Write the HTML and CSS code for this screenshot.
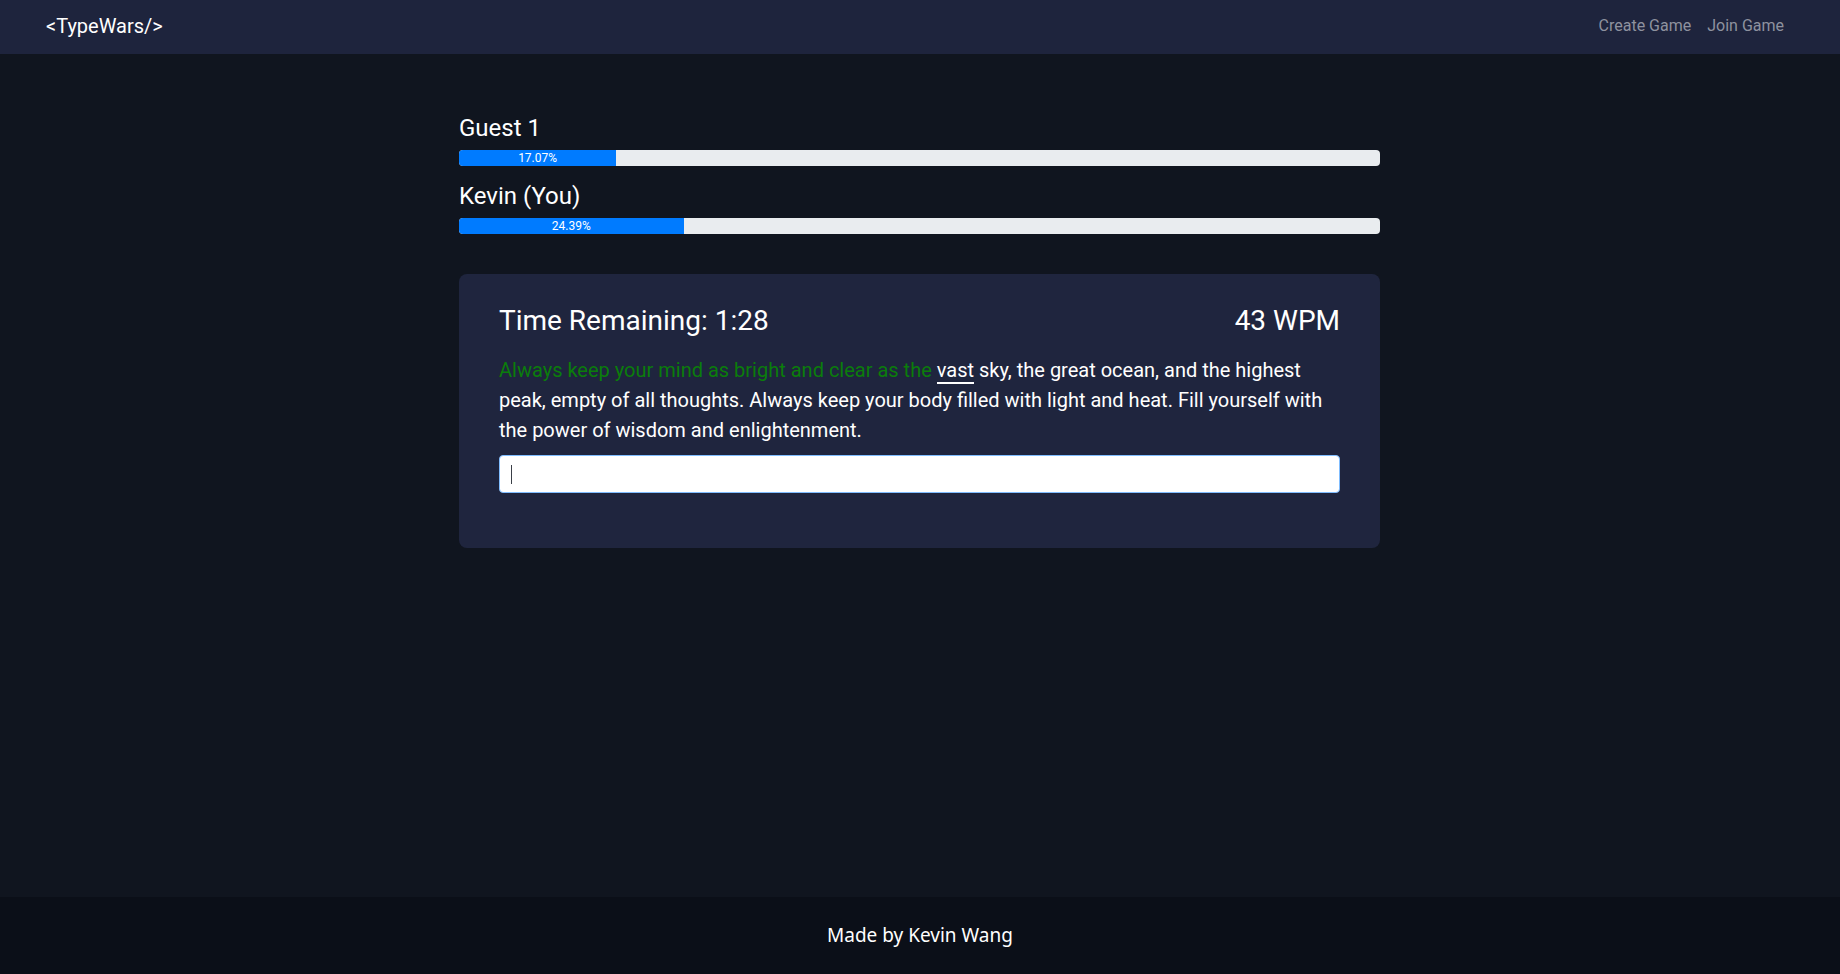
FILE: index.html
```html
<!DOCTYPE html>
<html lang="en">
<head>
<meta charset="utf-8">
<title>TypeWars</title>
<link rel="stylesheet" href="styles.css">
</head>
<body>
<div class="page">
  <nav class="navbar">
    <a class="brand" href="#">&lt;TypeWars/&gt;</a>
    <div class="nav-links">
      <a class="nav-link" href="#">Create Game</a>
      <a class="nav-link" href="#">Join Game</a>
    </div>
  </nav>
  <main class="main">
    <div class="game">
      <div class="player">
        <h4 class="player-name">Guest 1</h4>
        <div class="progress"><div class="progress-bar" style="width:17.07%">17.07%</div></div>
      </div>
      <div class="player">
        <h4 class="player-name">Kevin (You)</h4>
        <div class="progress"><div class="progress-bar" style="width:24.39%">24.39%</div></div>
      </div>
      <section class="card">
        <div class="card-head">
          <h3 class="timer">Time Remaining: 1:28</h3>
          <h3 class="wpm">43 WPM</h3>
        </div>
        <p class="passage"><span class="typed">Always keep your mind as bright and clear as the</span> <span class="current">vast</span> sky, the great ocean, and the highest peak, empty of all thoughts. Always keep your body filled with light and heat. Fill yourself with the power of wisdom and enlightenment.</p>
        <div class="input-wrap">
          <input class="type-input" type="text" aria-label="Type here">
          <span class="caret"></span>
        </div>
      </section>
    </div>
  </main>
  <footer class="footer">Made by Kevin Wang</footer>
</div>
</body>
</html>
```
FILE: styles.css
```css
* { box-sizing: border-box; }
html, body { margin: 0; padding: 0; }
body {
  background: #10151f;
  color: #ffffff;
  font-family: Roboto, "Liberation Sans", sans-serif;
}
.page {
  min-height: 974px;
  display: flex;
  flex-direction: column;
}
.navbar {
  height: 54px;
  background: #1e243d;
  display: flex;
  align-items: center;
  justify-content: space-between;
  padding: 0 56px 0 46px;
}
.brand {
  color: #ffffff;
  text-decoration: none;
  font-size: 20px;
  padding-bottom: 3px;
}
.nav-links { display: flex; gap: 16px; }
.nav-link {
  color: #8e929f;
  text-decoration: none;
  font-size: 16px;
  padding-bottom: 3px;
}
.main {
  flex: 1;
  padding-top: 60px;
}
.game {
  width: 922px;
  margin: 0 auto;
  padding-right: 1px;
}
.player-name {
  margin: 0 0 7px;
  font-size: 24px;
  font-weight: 400;
  line-height: 1.2;
}
.progress {
  height: 16px;
  background: #e9ecef;
  border-radius: 4px;
  overflow: hidden;
  display: flex;
  margin-bottom: 16px;
}
.progress-bar {
  background: #007bff;
  color: #ffffff;
  font-size: 12px;
  line-height: 16px;
  text-align: center;
  white-space: nowrap;
}
.player + .player .progress { margin-bottom: 40px; }
.card {
  background: #1f253e;
  border-radius: 8px;
  padding: 30px 40px 39px;
}
.card-head {
  display: flex;
  justify-content: space-between;
  align-items: baseline;
  margin-bottom: 18px;
}
.timer, .wpm {
  margin: 0;
  font-size: 28px;
  font-weight: 400;
  line-height: 1.2;
}
.passage {
  margin: 0 0 10px;
  font-size: 20px;
  line-height: 1.5;
}
.typed { color: #0b7d0b; }
.current { border-bottom: 2px solid #ffffff; }
.input-wrap {
  position: relative;
  margin-bottom: 16px;
}
.type-input {
  display: block;
  width: 100%;
  height: 38px;
  padding: 6px 12px;
  border: 1px solid #80bdff;
  border-radius: 4px;
  background: #ffffff;
  font-family: Roboto, "Liberation Sans", sans-serif;
  font-size: 16px;
  color: #495057;
  outline: none;
}
.caret {
  position: absolute;
  left: 12px;
  top: 10px;
  width: 1px;
  height: 19px;
  background: #3a3f47;
}
.footer {
  height: 77px;
  background: #0b0f18;
  display: flex;
  align-items: center;
  justify-content: center;
  font-family: "Noto Sans", "Open Sans", sans-serif;
  font-size: 19px;
  padding-bottom: 2px;
}
```
